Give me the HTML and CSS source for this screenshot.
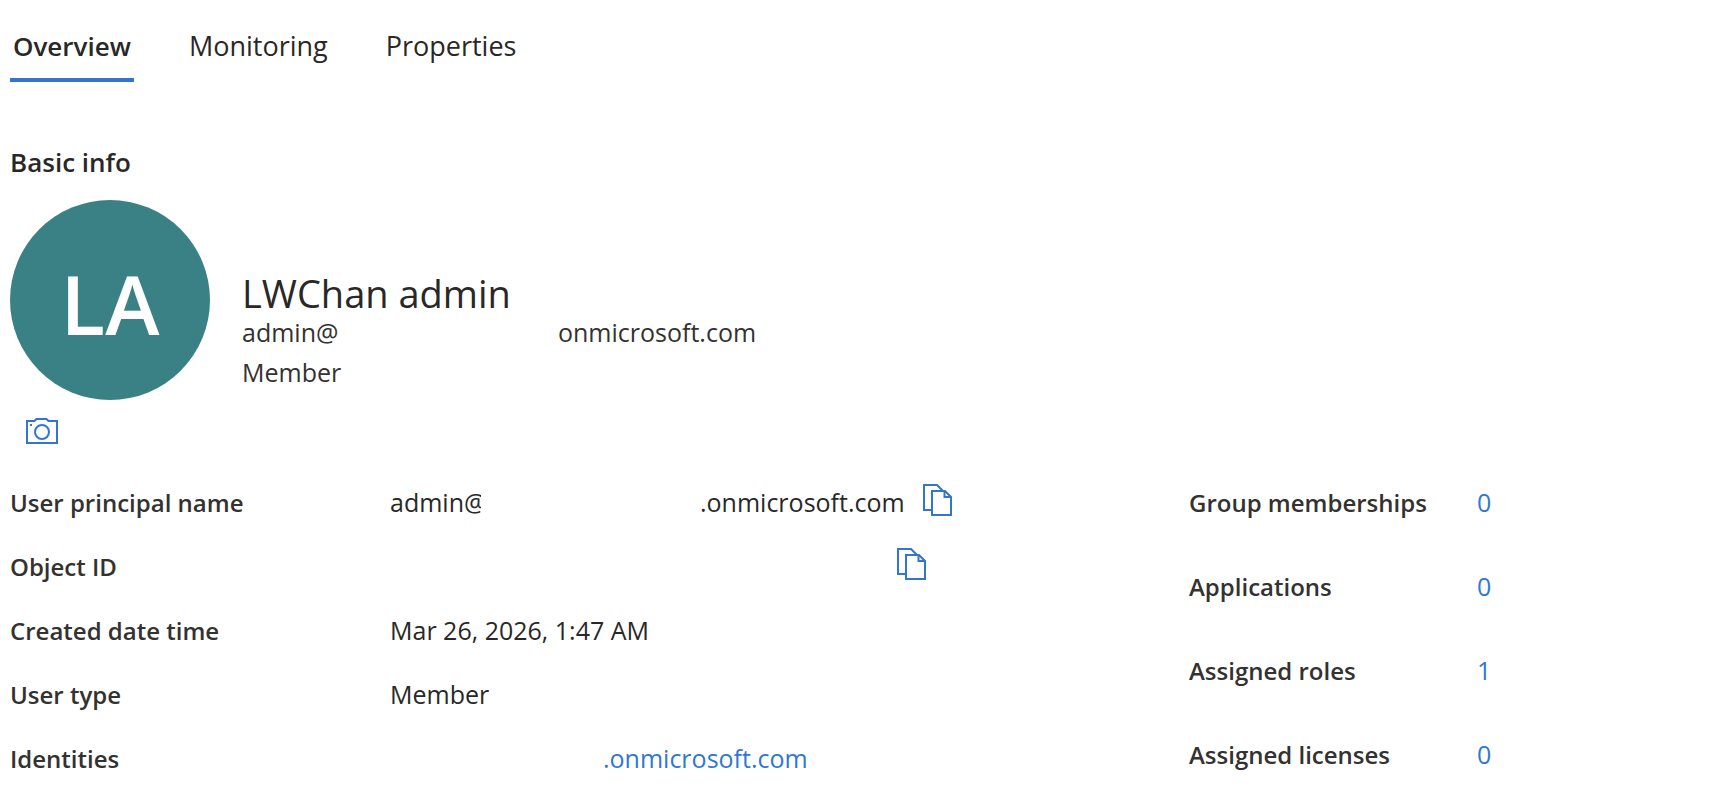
FILE: index.html
```html
<!DOCTYPE html>
<html lang="en">
<head>
    <meta charset="UTF-8">
    <meta name="viewport" content="width=device-width, initial-scale=1.0">
    <title>LWChan admin</title>
    <link rel="stylesheet" href="styles.css">
</head>
<body>
    <nav class="tabs" role="tablist">
        <button type="button" class="tab active" role="tab" aria-selected="true">Overview</button>
        <button type="button" class="tab" role="tab" aria-selected="false">Monitoring</button>
        <button type="button" class="tab" role="tab" aria-selected="false">Properties</button>
    </nav>

    <main>
        <h2>Basic info</h2>

        <section class="profile">
            <div class="avatar">LA</div>
            <div class="profile-text">
                <h1>LWChan admin</h1>
                <p class="email"><span class="account">admin@</span><span>onmicrosoft.com</span></p>
                <p>Member</p>
            </div>
        </section>

        <button type="button" class="icon-button photo" aria-label="Change photo">
            <svg width="32" height="26" viewBox="0 0 32 26" fill="none" stroke="currentColor" stroke-width="2">
                <path d="M1 3H8.500L10.500 1H20.500L22.500 3H31V25H1Z"/>
                <circle cx="16" cy="14" r="7"/>
                <path d="M4 7H6"/>
            </svg>
        </button>

        <section class="details">
            <dl class="info">
                <div class="row">
                    <dt>User principal name</dt>
                    <dd>
                        <span class="upn">admin@</span><span>.onmicrosoft.com</span>
                        <button type="button" class="icon-button copy" aria-label="Copy user principal name">
                            <svg width="29" height="32" viewBox="0 0 29 32" fill="none" stroke="currentColor" stroke-width="2">
                                <path d="M9 26H1V1H14L19.500 6.500"/>
                                <path d="M9 7H22L28 13V31H9Z"/>
                                <path d="M21.500 7V13H28"/>
                            </svg>
                        </button>
                    </dd>
                </div>
                <div class="row">
                    <dt>Object ID</dt>
                    <dd>
                        <span class="object-id"></span>
                        <button type="button" class="icon-button" aria-label="Copy object ID">
                            <svg width="29" height="32" viewBox="0 0 29 32" fill="none" stroke="currentColor" stroke-width="2">
                                <path d="M9 26H1V1H14L19.500 6.500"/>
                                <path d="M9 7H22L28 13V31H9Z"/>
                                <path d="M21.500 7V13H28"/>
                            </svg>
                        </button>
                    </dd>
                </div>
                <div class="row">
                    <dt>Created date time</dt>
                    <dd>Mar 26, 2026, 1:47 AM</dd>
                </div>
                <div class="row">
                    <dt>User type</dt>
                    <dd>Member</dd>
                </div>
                <div class="row">
                    <dt>Identities</dt>
                    <dd><a href="#" class="identity">.onmicrosoft.com</a></dd>
                </div>
            </dl>

            <dl class="counts">
                <div class="row">
                    <dt>Group memberships</dt>
                    <dd><a href="#">0</a></dd>
                </div>
                <div class="row">
                    <dt>Applications</dt>
                    <dd><a href="#">0</a></dd>
                </div>
                <div class="row">
                    <dt>Assigned roles</dt>
                    <dd><a href="#">1</a></dd>
                </div>
                <div class="row">
                    <dt>Assigned licenses</dt>
                    <dd><a href="#">0</a></dd>
                </div>
            </dl>
        </section>
    </main>
</body>
</html>
```
FILE: styles.css
```css
* {
    box-sizing: border-box;
}
body {
    margin: 0;
    padding: 26px 10px;
    font-family: "Open Sans", "Noto Sans", sans-serif;
    font-size: 25px;
    line-height: 36px;
    color: #292827;
    background: #fff;
}
h1, h2, p, dl, dd {
    margin: 0;
}
button {
    font-family: inherit;
    color: inherit;
    background: none;
    border: none;
    padding: 0;
    cursor: pointer;
}
a {
    color: #2f78d2;
    text-decoration: none;
}
a:hover {
    text-decoration: underline;
}

/* Tabs */
.tabs {
    display: flex;
    gap: 52px;
}
.tab {
    padding: 0 3px 12px;
    border-bottom: 4px solid transparent;
    font-size: 27px;
    line-height: 40px;
}
.tab.active {
    font-size: 26px;
    font-weight: 600;
    border-bottom-color: #3276d0;
}

/* Profile */
h2 {
    margin-top: 62px;
    font-size: 26px;
    font-weight: 600;
}
.profile {
    display: flex;
    align-items: flex-end;
    gap: 32px;
    margin-top: 20px;
}
.avatar {
    display: flex;
    align-items: center;
    justify-content: center;
    flex-shrink: 0;
    width: 200px;
    height: 200px;
    padding-top: 6px;
    border-radius: 50%;
    background: #3a8186;
    color: #fff;
    font-size: 82px;
    font-weight: 600;
}
.profile-text {
    padding-bottom: 8px;
    line-height: 40px;
    color: #333231;
}
h1 {
    font-size: 38px;
    font-weight: 400;
    line-height: 38px;
    color: #292827;
}
.email {
    display: flex;
}
.account {
    width: 316px;
}
.icon-button {
    display: block;
    color: #3276d0;
}
.icon-button svg {
    display: block;
}
.photo {
    margin: 18px 16px 0;
}

/* Details */
.details {
    display: grid;
    grid-template-columns: 1179fr 517fr;
    margin-top: 40px;
}
.info, .counts {
    display: flex;
    flex-direction: column;
}
.info {
    gap: 28px;
}
.counts {
    gap: 48px;
}
.row {
    display: flex;
    height: 36px;
}
dt {
    width: 380px;
    font-size: 24px;
    font-weight: 600;
    line-height: 38px;
    color: #333231;
}
.counts dt {
    width: 288px;
}
dd {
    display: flex;
    align-items: flex-start;
}
/* the tenant name is hidden, so the account part is cut short */
.upn {
    width: 91px;
    margin-right: 219px;
    overflow: hidden;
}
.copy {
    margin-left: 18px;
}
.object-id {
    width: 507px;
}
.identity {
    margin-left: 213px;
}
```
